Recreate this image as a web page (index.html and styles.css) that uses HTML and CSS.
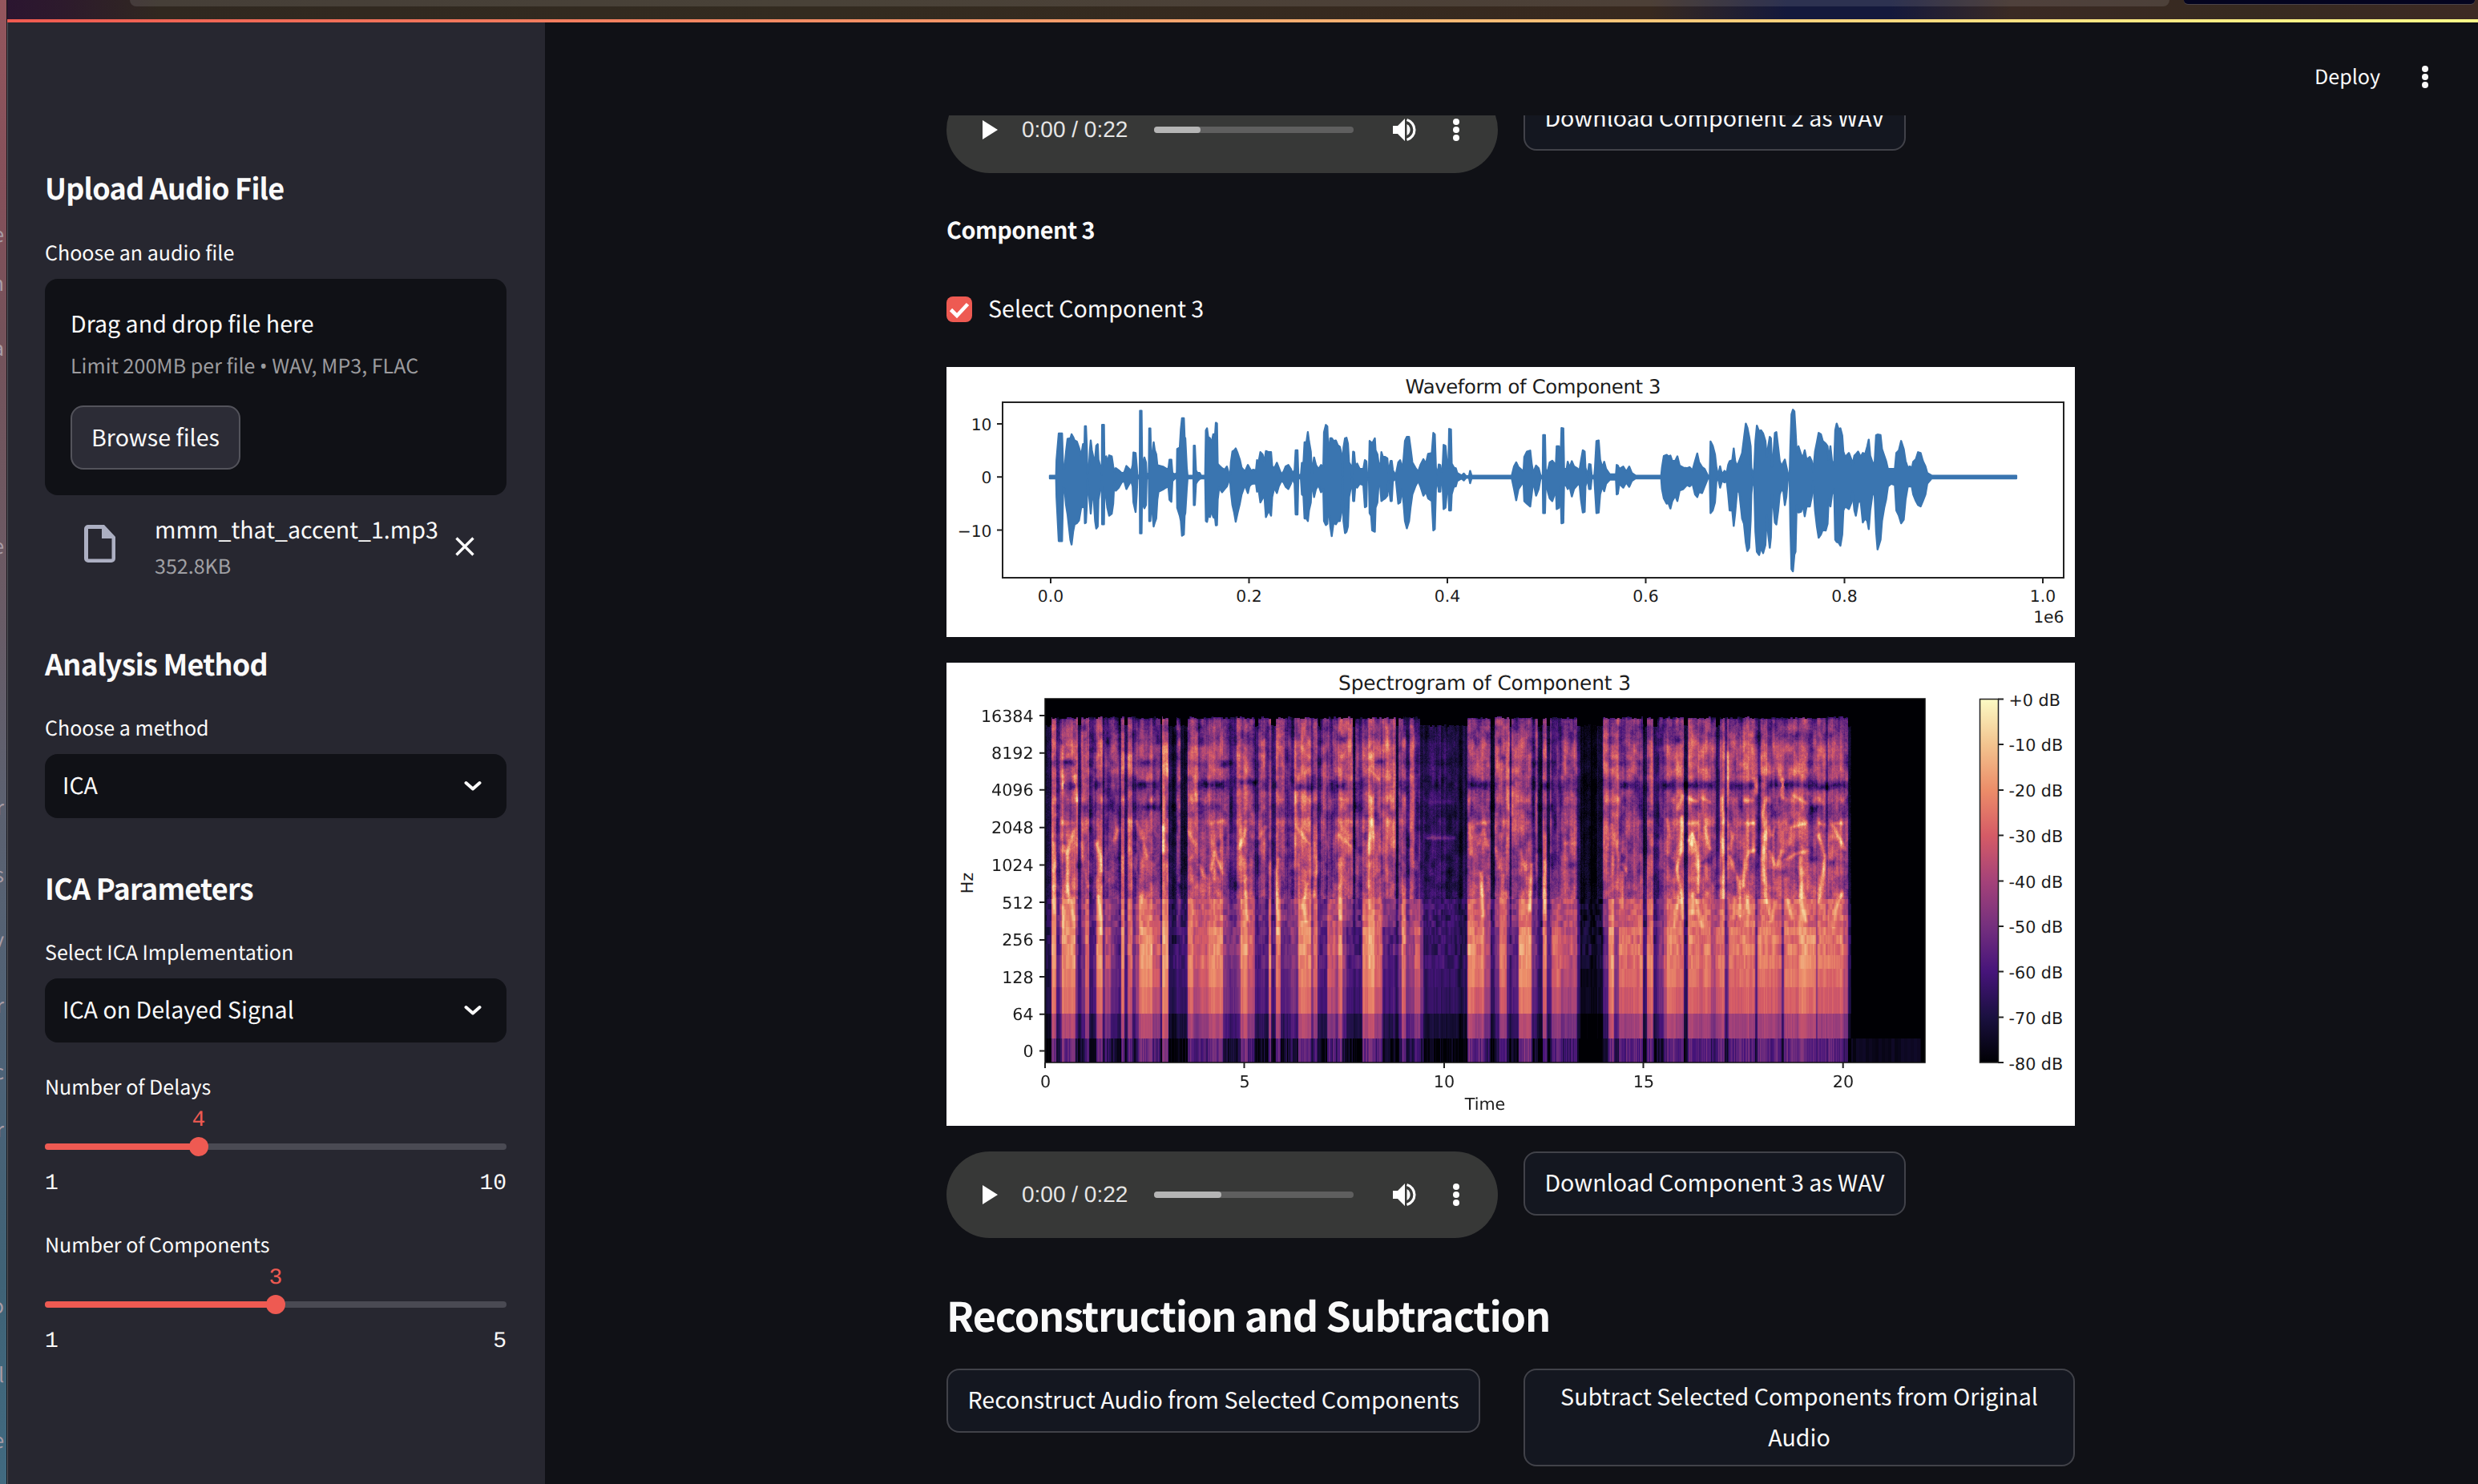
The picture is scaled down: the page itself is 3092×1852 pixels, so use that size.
FILE: index.html
```
<!DOCTYPE html>
<html lang="en">
<head>
<meta charset="utf-8">
<title>Audio Component Analysis</title>
<link rel="stylesheet" href="styles.css">
</head>
<body>
<div class="desktop">
  <span style="top:279px">e</span><span style="top:340px">n</span><span style="top:421px">a</span><span style="top:668px">e</span>
  <span style="top:994px">r</span><span style="top:1078px">s</span><span style="top:1159px">v</span><span style="top:1241px">r</span>
  <span style="top:1324px">c</span><span style="top:1396px">r</span><span style="top:1616px">o</span><span style="top:1702px">l</span><span style="top:1784px">e</span>
</div>
<div class="window">
  <div class="chrome"><div class="address"></div><div class="chip"></div></div>
  <div class="rainbow"></div>
  <div class="app">
    <aside class="sidebar">
      <h2>Upload Audio File</h2>
      <div class="label first">Choose an audio file</div>
      <div class="dropzone">
        <div class="drop-title">Drag and drop file here</div>
        <div class="drop-hint">Limit 200MB per file <span class="bullet">•</span> WAV, MP3, FLAC</div>
        <button class="btn browse">Browse files</button>
      </div>
      <div class="file">
        <svg class="file-icon" width="40" height="48" viewBox="0 0 40 48"><path fill="#acafc2" fill-rule="evenodd" d="M5 0H25L39 15V42a5 5 0 0 1-5 5H5a5 5 0 0 1-5-5V5a5 5 0 0 1 5-5ZM5 5V42.500H34.500V17H22V5Z"/></svg>
        <div class="file-info"><div class="file-name">mmm_that_accent_1.mp3</div><div class="file-size">352.8KB</div></div>
        <svg class="file-close" width="24" height="24" viewBox="0 0 24 24"><path d="M1.500 1.500L22.500 22.500M22.500 1.500L1.500 22.500" stroke="#fafafa" stroke-width="3.400"/></svg>
      </div>
      <h2>Analysis Method</h2>
      <div class="label">Choose a method</div>
      <div class="select"><span>ICA</span><svg width="22" height="14" viewBox="0 0 22 14"><path d="M2.500 3L11 10.500L19.500 3" fill="none" stroke="#fafafa" stroke-width="4" stroke-linecap="round" stroke-linejoin="round"/></svg></div>
      <h2 class="tight">ICA Parameters</h2>
      <div class="label">Select ICA Implementation</div>
      <div class="select"><span>ICA on Delayed Signal</span><svg width="22" height="14" viewBox="0 0 22 14"><path d="M2.500 3L11 10.500L19.500 3" fill="none" stroke="#fafafa" stroke-width="4" stroke-linecap="round" stroke-linejoin="round"/></svg></div>
      <div class="slider">
        <div class="slider-label">Number of Delays</div>
        <div class="value" style="width:66.667%">4</div>
        <div class="track"><div class="fill" style="width:33.333%"></div><div class="thumb"></div></div>
        <div class="ends"><span>1</span><span>10</span></div>
      </div>
      <div class="slider">
        <div class="slider-label">Number of Components</div>
        <div class="value" style="width:100%">3</div>
        <div class="track"><div class="fill" style="width:50%"></div><div class="thumb"></div></div>
        <div class="ends"><span>1</span><span>5</span></div>
      </div>
    </aside>
    <main class="main">
      <header class="header"><span class="deploy">Deploy</span><svg width="12" height="32" viewBox="0 0 12 32" fill="#fafafa"><circle cx="6" cy="6" r="4"/><circle cx="6" cy="16" r="4"/><circle cx="6" cy="26" r="4"/></svg></header>
      <div class="scroll">
        <div class="content">
          <div class="columns clipped">
            <div class="audio">
              <svg class="play" width="20" height="24" viewBox="0 0 20 24"><path d="M0 0L19 12L0 24Z" fill="#fff"/></svg>
              <span class="time">0:00 / 0:22</span>
              <div class="bar"><div class="buffered" style="width:58px"></div></div>
              <svg class="volume" width="32" height="32" viewBox="0 0 32 32"><path d="M1 11H7L16 2V30L7 21H1Z" fill="#fff"/><path d="M18.500 9a8 8 0 0 1 0 14Z" fill="#fff"/><path d="M18.500 3.500a13 13 0 0 1 0 25" fill="none" stroke="#fff" stroke-width="3.200"/></svg>
              <svg class="more" width="10" height="30" viewBox="0 0 10 30" fill="#fff"><circle cx="5" cy="5" r="4"/><circle cx="5" cy="15" r="4"/><circle cx="5" cy="25" r="4"/></svg>
            </div>
            <button class="btn">Download Component 2 as WAV</button>
          </div>
          <h4>Component 3</h4>
          <div class="check"><svg width="32" height="32" viewBox="0 0 32 32"><rect width="32" height="32" rx="8" fill="#ee5a52"/><path d="M5.500 16.500L13 24L26.500 9.500" fill="none" stroke="#fff" stroke-width="4.600"/></svg><span>Select Component 3</span></div>
          <svg class="plot" id="waveform" width="1408" height="337" viewBox="1181 458 1408 337">
            <text class="title" x="1913" y="490.500" text-anchor="middle" textLength="319">Waveform of Component 3</text>
            <polygon id="wave" fill="#3a75b0" stroke="#3a75b0" stroke-width="2.400" stroke-linejoin="round"/>
            <rect x="1251" y="502" width="1324" height="219" fill="none" stroke="#222" stroke-width="2"/>
            <path d="M1311 721v7M1558.500 721v7M1806 721v7M2053.500 721v7M2301.500 721v7M2549 721v7M1251 529h-7M1251 595.300h-7M1251 661.500h-7" stroke="#222" stroke-width="2"/>
            <g text-anchor="middle"><text x="1311" y="750.500">0.0</text><text x="1558.500" y="750.500">0.2</text><text x="1806" y="750.500">0.4</text><text x="2053.500" y="750.500">0.6</text><text x="2301.500" y="750.500">0.8</text><text x="2549" y="750.500">1.0</text></g>
            <g text-anchor="end"><text x="2575.500" y="776.500">1e6</text><text x="1237.500" y="536.500">10</text><text x="1237.500" y="602.800">0</text><text x="1237.500" y="669.500">−10</text></g>
          </svg>
          <svg class="plot second" width="1408" height="578" viewBox="1181 827 1408 578">
            <defs><linearGradient id="magma" x1="0" y1="0" x2="0" y2="1"><stop offset="0" stop-color="#fbfac4"/><stop offset=".125" stop-color="#f3c48f"/><stop offset=".25" stop-color="#ec8d69"/><stop offset=".375" stop-color="#d55b66"/><stop offset=".5" stop-color="#a54279"/><stop offset=".625" stop-color="#75307e"/><stop offset=".75" stop-color="#46147a"/><stop offset=".875" stop-color="#1a1040"/><stop offset="1" stop-color="#000004"/></linearGradient></defs>
            <text class="title" x="1852.500" y="860.500" text-anchor="middle" textLength="365">Spectrogram of Component 3</text>
            <foreignObject x="1304" y="872" width="1098" height="454"><canvas id="spectrogram" width="1098" height="454"></canvas></foreignObject>
            <rect x="1304" y="872" width="1098" height="454" fill="none" stroke="#111" stroke-width="1.500"/>
            <path d="M1304 893h-7M1304 939.800h-7M1304 985.700h-7M1304 1032.800h-7M1304 1079.500h-7M1304 1126h-7M1304 1173h-7M1304 1219h-7M1304 1265.800h-7M1304 1311.400h-7M1304 1326v7M1552.500 1326v7M1802 1326v7M2050.500 1326v7M2299.700 1326v7" stroke="#222" stroke-width="2"/>
            <g text-anchor="end"><text x="1289.700" y="900.500">16384</text><text x="1289.700" y="947.300">8192</text><text x="1289.700" y="993.300">4096</text><text x="1289.700" y="1040.300">2048</text><text x="1289.700" y="1087">1024</text><text x="1289.700" y="1133.700">512</text><text x="1289.700" y="1180.400">256</text><text x="1289.700" y="1226.700">128</text><text x="1289.700" y="1273.400">64</text><text x="1289.700" y="1319">0</text></g>
            <g text-anchor="middle"><text x="1304.500" y="1356.500">0</text><text x="1553" y="1356.500">5</text><text x="1802" y="1356.500">10</text><text x="2051" y="1356.500">15</text><text x="2300" y="1356.500">20</text><text x="1853" y="1385">Time</text><text transform="translate(1213.500 1102) rotate(-90)">Hz</text></g>
            <rect x="2470.500" y="872.500" width="23" height="453.500" fill="url(#magma)" stroke="#222" stroke-width="1.500"/>
            <path d="M2493 872.500h7M2493 929h7M2493 986h7M2493 1042.500h7M2493 1099.500h7M2493 1156h7M2493 1212.500h7M2493 1269.500h7M2493 1326h7" stroke="#222" stroke-width="2"/>
            <g><text x="2506.500" y="880.500">+0 dB</text><text x="2506.500" y="937.200">-10 dB</text><text x="2506.500" y="994">-20 dB</text><text x="2506.500" y="1050.700">-30 dB</text><text x="2506.500" y="1107.500">-40 dB</text><text x="2506.500" y="1164">-50 dB</text><text x="2506.500" y="1221">-60 dB</text><text x="2506.500" y="1277.700">-70 dB</text><text x="2506.500" y="1334.500">-80 dB</text></g>
          </svg>
          <div class="columns player">
            <div class="audio">
              <svg class="play" width="20" height="24" viewBox="0 0 20 24"><path d="M0 0L19 12L0 24Z" fill="#fff"/></svg>
              <span class="time">0:00 / 0:22</span>
              <div class="bar"><div class="buffered" style="width:84px"></div></div>
              <svg class="volume" width="32" height="32" viewBox="0 0 32 32"><path d="M1 11H7L16 2V30L7 21H1Z" fill="#fff"/><path d="M18.500 9a8 8 0 0 1 0 14Z" fill="#fff"/><path d="M18.500 3.500a13 13 0 0 1 0 25" fill="none" stroke="#fff" stroke-width="3.200"/></svg>
              <svg class="more" width="10" height="30" viewBox="0 0 10 30" fill="#fff"><circle cx="5" cy="5" r="4"/><circle cx="5" cy="15" r="4"/><circle cx="5" cy="25" r="4"/></svg>
            </div>
            <button class="btn">Download Component 3 as WAV</button>
          </div>
          <h1>Reconstruction and Subtraction</h1>
          <div class="columns actions">
            <button class="btn wide">Reconstruct Audio from Selected Components</button>
            <button class="btn tall">Subtract Selected Components from Original<br>Audio</button>
          </div>
        </div>
      </div>
    </main>
  </div>
</div>
<script src="charts.js"></script>
</body>
</html>
```
FILE: styles.css
```
* { box-sizing: border-box; }
body {
  margin: 0;
  width: 3092px;
  height: 1852px;
  overflow: hidden;
  display: flex;
  background: #101116;
  color: #fafafa;
  font-family: "Noto Sans CJK SC", "Noto Sans", sans-serif;
  font-size: 28.600px;
  text-rendering: geometricPrecision;
}
svg { display: block; flex: none; }
.desktop {
  position: relative;
  flex: none;
  width: 8px;
  overflow: hidden;
  background: linear-gradient(#94565d 0, #84505a 240px, #74525a 420px, #6b5a64 720px, #5c6170 1000px, #4c6277 1350px, #3f6276 1600px, #416a80 1852px);
}
.desktop span {
  position: absolute;
  right: 3px;
  font-size: 25px;
  line-height: 26px;
  color: #a99ca6;
}
.window {
  flex: 1;
  display: flex;
  flex-direction: column;
  border-left: 1px solid #15151a;
}
.chrome {
  height: 24px;
  display: flex;
  align-items: flex-start;
  padding-left: 153px;
  gap: 18px;
  background: linear-gradient(90deg, #2b1530 0, #2d1a2c 70px, #302820 190px, #332b20 1000px, #38291f 2050px, #14193c 2220px, #14193c 2350px, #3a2a24 2500px, #372a20 2800px, #3d2a24 3083px);
}
.address { width: 2545px; height: 8px; background: rgba(255,255,255,.11); border-radius: 0 0 10px 10px; }
.chip { width: 363px; height: 5px; background: #04041f; border-radius: 0 0 6px 6px; box-shadow: 0 1px 0 #4b4348; }
.rainbow { height: 4px; background: linear-gradient(90deg, #ef5a50, #f4a06c 45%, #fbdc80 78%, #fffb88); }
.app { flex: 1; display: flex; min-height: 0; }
.sidebar {
  flex: none;
  width: 671px;
  padding: 182px 48px 0 46px;
  background: #272730;
  border-left: 1px solid #55555c;
}
h1, h2, h4 { margin: 0; font-weight: 600; white-space: nowrap; }
h2 { font-size: 36px; line-height: 48px; letter-spacing: -.75px; }
h2.tight { margin-top: 63px; }
.label { margin: 36px 0 13px; font-size: 25.050px; line-height: 40px; }
.label.first { margin-top: 37px; }
.dropzone { height: 270px; padding: 32px; border-radius: 16px; background: #101116; }
.drop-title { line-height: 48px; }
.drop-hint { margin: 8px 0 30px; font-size: 25.050px; line-height: 40px; height: 40px; color: #9b9b9e; white-space: nowrap; }
.bullet { font-family: "Noto Sans", sans-serif; line-height: 1; }
.btn {
  height: 80px;
  padding: 0 26px 3px;
  border: 2px solid #414249;
  border-radius: 16px;
  background: #141720;
  color: #fafafa;
  font: inherit;
  line-height: 51.200px;
  white-space: nowrap;
}
.browse { width: 212px; padding: 0 0 3px; background: #2c2c36; border-color: #53535b; }
.file { display: flex; height: 186px; padding: 27px 8px 0 49px; }
.file-icon { margin-top: 10px; }
.file-info { flex: 1; margin-left: 48px; white-space: nowrap; }
.file-name { height: 32px; line-height: 32px; }
.file-size { margin-top: 13px; font-size: 25.050px; line-height: 32px; color: #a0a0a4; }
.file-close { margin: 25px 32px 0 0; }
.select {
  display: flex;
  justify-content: space-between;
  align-items: center;
  height: 80px;
  padding: 0 31px 3px 22px;
  border-radius: 16px;
  background: #101116;
}
.select svg { margin-top: 3px; }
.slider { margin-top: 35px; }
.slider + .slider { margin-top: 39px; }
.slider-label { font-size: 25.050px; line-height: 40px; }
.value, .ends { font-family: "Liberation Mono", monospace; font-size: 28px; }
.value { margin-top: 3px; line-height: 40px; text-align: center; color: #ee5a52; }
.track {
  display: flex;
  align-items: center;
  height: 8px;
  margin: 8px 0 27px;
  border-radius: 4px;
  background: #4a4a53;
}
.fill { height: 8px; border-radius: 4px; background: #ee5a52; }
.thumb { flex: none; width: 24px; height: 24px; margin-left: -12px; border-radius: 50%; background: #ee5a52; }
.ends { display: flex; justify-content: space-between; line-height: 32px; }
.main { flex: 1; min-width: 0; display: flex; flex-direction: column; background: #101116; }
.header {
  flex: none;
  height: 116px;
  display: flex;
  justify-content: flex-end;
  gap: 50px;
  padding: 52px 60px 0 0;
}
.deploy { font-size: 25.050px; line-height: 30px; }
.scroll { flex: 1; min-height: 0; overflow: hidden; padding-left: 501px; }
.content { width: 1408px; }
.columns { display: grid; grid-template-columns: 688px 688px; gap: 32px; align-items: start; justify-items: start; }
.clipped { margin-top: -36px; }
.columns .btn { width: 477px; padding: 0 0 4px; }
.columns .wide { width: 666px; }
.audio {
  display: flex;
  align-items: center;
  width: 688px;
  height: 108px;
  padding-left: 45px;
  border-radius: 54px;
  background: #373837;
}
.time { width: 134px; margin-left: 29px; font-family: "Liberation Sans", Arial, sans-serif; font-size: 28px; color: #e6e6e6; white-space: nowrap; }
.bar { width: 249px; height: 8px; margin-left: 31px; border-radius: 4px; background: #5f5f5f; }
.buffered { height: 8px; border-radius: 4px; background: #b5b5b5; }
.volume { margin-left: 48px; }
.more { margin-left: 43px; }
h4 { margin-top: 47px; font-size: 28.800px; line-height: 48px; letter-spacing: -.5px; }
.check { display: flex; align-items: center; gap: 20px; height: 32px; margin: 59px 0 56px; line-height: 32px; }
.check span { margin-top: -3px; }
.plot { background: #fff; }
.plot text { font-family: "DejaVu Sans", sans-serif; font-size: 20.300px; fill: #1c1c1c; }
.plot .title { font-size: 24.300px; }
.second text { font-size: 20.700px; }
.second .title { font-size: 24.800px; }
.plot canvas { display: block; }
.second { margin-top: 32px; }
.player { margin-top: 32px; }
h1 { margin-top: 64px; font-size: 50.400px; line-height: 64px; letter-spacing: -1.130px; }
.actions { margin-top: 35px; }
.columns .tall { width: 688px; height: 122px; }
```
FILE: charts.js
```
// Waveform envelope: x, top, bottom triples for both halves of the recording.
const waveA = `305 430 440;322 430 440;323 372 510;329 272 675;338 272 675;341 405 475;345 400 480;349 340 540;353 292 575;361 290 672;364 275 688;368 285 640;372 298 612;378 302 608;384 325 598;390 355 548;395 312 548;399 312 545;400 245 608;403 245 606;405 315 545;407 425 445;411 400 500;414 330 540;416 298 572;419 335 520;424 368 515;428 365 600;431 318 628;435 312 620;437 370 520;442 395 480;446 425 450;447 240 612;452 240 612;453 360 505;458 358 512;461 380 550;466 354 580;473 358 572;477 395 535;480 415 450;484 402 486;492 410 475;500 420 455;507 418 450;513 394 480;521 405 460;526 415 450;530 390 470;532 343 530;538 345 566;541 395 500;543 430 440;549 428 440;550 187 646;554 187 646;556 420 440;558 385 540;562 362 552;566 380 540;568 430 440;574 420 440;575 253 600;578 253 600;580 355 540;584 350 570;587 305 620;590 335 605;594 350 590;597 390 520;600 392 490;612 396 482;620 403 475;627 405 470;630 370 520;635 370 528;638 420 450;645 425 440;650 420 440;651 330 550;658 325 580;661 255 600;664 215 655;669 215 650;671 285 580;673 290 570;677 400 480;679 430 440;695 430 440;696 318 540;699 318 540;702 410 460;706 420 450;712 420 442;716 430 440;727 430 440;729 260 600;732 253 603;735 285 580;740 290 585;744 310 560;749 275 585;754 275 590;756 232 616;759 235 615;761 385 520;765 392 475;773 402 492;780 408 480;786 396 470;791 420 450;795 425 450;797 380 490;801 340 540;806 335 570;810 328 602;815 345 570;821 370 535;826 400 500;835 415 465;843 390 495;847 400 470;852 412 462;857 408 460;865 410 460;868 372 490;872 380 480;877 342 530;883 350 515;888 380 505;892 338 585;900 342 560;906 342 580;909 395 510;915 402 475;922 382 495;927 400 470;934 425 450;940 415 455;946 395 472;953 390 480;960 405 460;964 420 440;970 410 460;973 335 575;978 335 575;980 425 440;987 430 440;990 382 500;994 385 505;997 305 590;1002 306 590;1006 267 600;1009 300 560;1014 340 530;1017 420 450;1023 362 510;1028 390 480;1035 405 465;1042 390 492;1048 400 480;1050 268 600;1055 240 615;1059 245 610;1062 355 530;1067 290 620;1071 290 656;1076 300 605;1082 298 612;1087 315 600;1093 322 600;1097 345 570;1100 430 440;1103 325 600;1107 290 645;1111 288 640;1115 310 620;1118 380 510;1122 390 480;1126 430 440;1129 340 525;1132 342 525;1135 395 470;1140 385 475;1147 405 460;1157 405 465;1161 372 548;1165 376 545;1167 420 440;1172 420 440;1174 300 570;1178 305 580;1181 310 635;1188 290 640;1190 335 550;1195 350 530;1198 380 470;1203 400 470;1206 342 525;1210 360 520;1216 360 515;1222 365 505;1225 420 450;1231 375 525;1234 375 525;1237 410 450;1245 428 440;1252 380 535;1257 372 530;1262 405 480;1266 370 530;1270 300 600;1275 285 627;1281 285 600;1285 325 550;1290 380 500;1298 400 470;1306 415 450;1312 390 470;1320 368 505;1327 385 490;1333 348 515;1343 345 525;1347 270 635;1351 275 630;1354 400 480;1359 425 440;1362 388 490;1366 390 490;1368 415 450;1372 410 450;1375 315 555;1380 318 550;1384 380 490;1388 400 480;1390 255 560;1395 257 560;1397 385 500;1403 400 470;1408 402 470;1412 420 450;1424 430 440;1430 422 448;1436 432 438;1444 432 438;1447 412 458;1451 430 440;1550 430 440`;
const waveB = `14 430 440;20 395 480;26 380 522;32 398 480;42 410 460;46 410 460;48 360 525;55 340 535;64 336 545;68 385 500;72 420 450;80 392 505;87 402 480;92 430 440;98 430 440;99 278 570;104 278 570;106 410 450;112 410 490;117 380 515;124 374 525;130 385 500;134 385 490;136 320 555;142 320 550;146 400 470;149 252 608;154 253 606;156 405 460;163 405 470;166 378 480;171 400 470;177 376 508;183 395 480;192 403 465;198 410 460;202 375 520;207 335 568;212 340 565;214 400 470;220 430 440;224 387 480;228 388 480;231 430 440;238 430 440;240 400 480;244 300 570;250 298 568;254 370 500;260 400 470;265 378 488;270 405 460;280 425 445;297 425 445;299 390 500;302 392 498;306 405 460;317 396 475;325 415 455;333 396 472;340 420 450;350 430 440;420 430 440;422 400 480;427 356 515;435 352 535;439 358 530;445 355 553;450 375 525;458 375 505;464 358 525;470 392 485;480 400 480;490 402 465;497 398 470;505 410 460;512 375 500;518 347 510;523 380 490;531 398 495;538 405 470;547 430 440;552 430 440;554 302 570;560 318 560;566 350 530;570 400 450;575 430 440;580 395 475;585 425 450;592 412 455;598 420 450;602 390 500;606 376 560;613 372 560;617 328 618;621 375 570;626 395 490;632 375 490;640 345 590;645 290 610;650 235 680;654 250 712;659 285 700;663 320 600;665 400 500;669 430 440;673 400 470;676 300 640;680 243 715;686 265 727;691 260 700;697 272 720;703 300 690;707 360 580;711 320 650;715 285 700;718 290 660;721 395 500;724 370 530;729 270 605;733 267 613;738 325 560;742 375 500;747 395 480;752 380 490;756 370 540;760 395 510;764 420 445;769 425 445;771 320 620;774 200 780;778 183 788;782 190 725;785 260 715;788 340 540;793 320 568;800 350 565;805 362 540;810 335 582;815 370 545;824 360 545;829 375 510;833 415 450;838 340 560;843 305 620;848 270 662;854 275 650;859 300 632;867 310 635;872 320 610;875 370 520;880 320 545;884 375 500;890 390 480;893 260 670;897 235 678;902 255 680;907 253 692;912 280 650;915 340 560;920 360 545;930 345 555;937 370 530;940 390 490;945 355 560;949 350 580;955 340 530;962 360 525;968 345 605;974 350 590;980 320 600;984 295 630;988 355 560;994 380 500;1000 385 500;1004 278 640;1008 276 706;1016 278 670;1020 330 600;1026 355 550;1031 375 520;1036 405 470;1045 405 460;1055 405 465;1059 345 560;1066 335 580;1072 300 608;1079 330 595;1084 375 520;1090 400 470;1096 395 470;1101 405 470;1105 378 500;1112 368 525;1118 342 540;1125 345 545;1131 375 525;1138 395 500;1143 420 460;1155 430 440;1385 430 440`;
const env = [];
for (const [src, x0] of [[waveA, 1170], [waveB, 1880]]) {
  for (const t of src.split(';')) {
    const [x, a, b] = t.split(' ').map(Number);
    env.push([x0 + x / 2.178, 450.3 + a / 3, 450.3 + b / 3]);
  }
}
document.getElementById('wave').setAttribute('points',
  env.map(p => p[0].toFixed(1) + ',' + p[1].toFixed(1)).join(' ') + ' ' +
  env.slice().reverse().map(p => p[0].toFixed(1) + ',' + p[2].toFixed(1)).join(' '));

// Spectrogram segments: end position (third-pixels), level above 512 Hz, level below.
const segA = `22,8,15 42,60,78 52,28,32 62,50,45 112,58,78 122,60,42 133,12,25 150,56,40 165,60,70 180,30,28 190,40,35 215,58,74 225,28,40 245,35,58 275,42,38 283,20,28 295,58,76 307,15,28 327,58,65 337,28,35 350,45,55 400,50,78 430,36,62 437,12,35 462,62,82 490,12,20 505,45,28 533,8,25 555,60,76 572,62,62 612,40,65 665,54,76 690,40,42 717,28,40 730,60,45 757,56,77 785,46,62 797,20,28 825,48,32 835,28,25 845,52,75 862,18,30 880,58,72 895,60,35 920,32,35 932,28,45 948,62,40 995,62,77 1003,30,45 1020,58,70 1032,22,30 1055,45,28 1085,40,62 1098,50,55`;
const segB = `15,64,75 30,60,45 52,62,30 63,10,25 75,48,30 90,30,25 110,48,75 135,62,80 165,50,65 215,60,30 225,15,25 235,45,40 252,55,76 265,25,45 285,60,50 305,30,66 317,10,45 445,18,24 482,8,18 510,48,78 545,50,72 570,50,55 583,10,25 603,58,40 628,55,70 640,62,35 647,15,25 675,55,35 722,45,76 738,30,40 746,45,30 763,15,25 780,52,72 790,15,30 798,50,35 832,30,66 870,46,55 892,48,58 905,20,25 990,7,10 1010,60,35 1030,52,78 1048,60,45 1070,40,70 1098,42,66`;
const segC = `25,45,68 42,35,72 57,12,25 80,52,72 95,15,25 118,30,40 132,40,60 165,50,76 195,58,70 208,12,22 250,60,72 265,48,65 295,55,70 315,45,55 330,15,65 347,60,72 355,25,35 362,60,40 415,48,70 460,60,72 470,45,35 483,25,72 507,60,72 545,46,70 560,52,62 570,55,35 600,52,72 625,52,70 660,58,78 688,40,74 696,50,50 725,55,70 735,25,65 790,52,70 808,48,60 820,10,20 1098,-30,-30`;
const W = 1098, H = 454;
const hi = new Float32Array(W), lo = new Float32Array(W);
[segA, segB, segC].forEach((s, k) => {
  let x = k * 366;
  for (const t of s.split(' ')) {
    const [e, h, l] = t.split(',').map(Number);
    const end = k * 366 + e / 3;
    for (; x < end; x++) { hi[x] = h / 100; lo[x] = l / 100; }
  }
});
const rnd = (x, y) => {
  let n = Math.imul(x + 7, 374761393) ^ Math.imul(y + 13, 668265263);
  n = Math.imul(n ^ (n >>> 13), 1274126177);
  return ((n ^ (n >>> 16)) >>> 0) / 4294967296 - .5;
};
const smooth = (x, y) => {
  const i = Math.floor(x), j = Math.floor(y), f = x - i, g = y - j;
  const u = f * f * (3 - 2 * f), v = g * g * (3 - 2 * g);
  return (rnd(i, j) * (1 - u) + rnd(i + 1, j) * u) * (1 - v) + (rnd(i, j + 1) * (1 - u) + rnd(i + 1, j + 1) * u) * v;
};
// Average spectrum shape over the upper part: y, offset.
const shape = [[70, -.3], [80, -.14], [150, -.1], [175, .01], [215, .01], [235, -.05], [262, .03], [290, 0], [308, -.1], [335, -.12], [355, -.04], [378, 0], [400, -.1], [440, -.07], [460, .03], [485, 0], [540, -.01], [590, -.05], [650, -.06], [700, -.06], [755, -.02]];
const offset = y => {
  for (let i = 1; i < shape.length; i++) if (y <= shape[i][0]) {
    const a = shape[i - 1], b = shape[i];
    return a[1] + (b[1] - a[1]) * (y - a[0]) / (b[0] - a[0]);
  }
  return 0;
};
const extra = new Float32Array(W * H);
const ridge = (k, pts, amp, r) => {
  for (let i = 1; i < pts.length; i++) {
    const [x0, y0] = pts[i - 1], [x1, y1] = pts[i];
    const n = Math.ceil(Math.hypot(x1 - x0, y1 - y0) / 2);
    for (let s = 0; s <= n; s++) {
      const cx = k * 366 + (x0 + (x1 - x0) * s / n) / 3, cy = (y0 + (y1 - y0) * s / n) / 3;
      for (let y = Math.floor(cy - r * 2); y <= cy + r * 2; y++) for (let x = Math.floor(cx - r * 2); x <= cx + r * 2; x++) {
        if (x < 0 || y < 0 || x >= W || y >= H) continue;
        const e = amp * Math.exp(-((x - cx) ** 2 + (y - cy) ** 2) / (r * r));
        const q = y * W + x;
        if (Math.abs(e) > Math.abs(extra[q])) extra[q] = e;
      }
    }
  }
};
const ridges = [
  [0, '32,540 36,600 30,700 34,800', .2], [0, '68,550 80,585 98,520 108,490', .22], [0, '82,590 82,720', .25], [0, '80,700 98,770 108,850', .22], [0, '66,780 66,850', .16], [0, '60,270 66,330', .18], [0, '112,290 120,380', .18],
  [0, '135,540 142,620 158,700', .16], [0, '190,540 208,590 212,640', .18], [0, '198,740 212,880', .24], [0, '256,530 272,490', .2], [0, '340,460 356,500 380,590', .17], [0, '356,740 354,850', .15], [0, '440,480 440,570', .18], [0, '450,160 456,280', .14],
  [0, '533,490 560,545', .16], [0, '555,290 566,380', .18], [0, '575,620 598,670', .18], [0, '620,640 634,575 664,650', .24], [0, '632,600 640,720', .14], [0, '725,560 750,490', .2], [0, '742,600 750,740 760,830', .16], [0, '797,520 825,480', .17], [0, '872,600 862,650 872,880', .22],
  [0, '935,350 940,480 985,540', .2], [0, '980,690 965,770 975,830', .2], [0, '1005,540 1015,640 1004,740', .18], [0, '66,465 104,465', .12], [0, '622,465 664,455', .14],
  [1, '0,510 45,550', .18], [1, '5,600 5,820', .18], [1, '122,200 125,270 150,300', .13], [1, '122,370 122,470 105,600 110,700', .18], [1, '125,480 150,640', .14], [1, '190,270 190,370', .12], [1, '247,830 247,960', .1], [1, '487,470 495,580', .18], [1, '525,540 540,490 560,560', .16], [1, '530,650 540,810', .24], [1, '520,465 548,465', .16],
  [1, '590,560 600,630', .16], [1, '615,660 605,760', .16], [1, '630,330 636,410', .16], [1, '650,330 648,430', .16], [1, '680,570 700,640', .18], [1, '722,620 716,790', .3], [1, '771,610 771,800', .28], [1, '335,520 430,520', .16], [1, '330,385 430,385', .06], [1, '850,540 885,540', .15], [1, '1005,560 1022,470 1050,600', .13], [1, '1060,650 1060,780', .2], [1, '1066,620 1075,640', .2],
  [2, '130,450 145,520', .15], [2, '172,410 190,362', .2], [2, '186,440 184,560 168,640 184,730 192,820', .28], [2, '180,700 158,850', .2], [2, '210,370 240,385', .18], [2, '265,370 290,385', .2], [2, '210,465 240,465', .22], [2, '212,530 225,505 238,540 248,640 248,720', .28], [2, '222,520 222,545', .26], [2, '272,480 292,560', .22], [2, '228,730 228,800', .2], [2, '238,750 262,850', .22],
  [2, '340,370 340,530 342,740', .22], [2, '357,200 358,400', .16], [2, '366,470 376,520 362,560', .16], [2, '365,590 402,690 404,810', .26], [2, '414,700 426,600 440,570 456,566', .26], [2, '425,380 450,380', .22], [2, '425,465 455,465', .22], [2, '465,300 465,350', .24], [2, '502,370 488,430 500,500 490,600 500,740', .22], [2, '430,740 436,800', .2], [2, '385,740 380,820', .2],
  [2, '510,480 524,510 535,480', .18], [2, '515,570 540,630 560,570', .2], [2, '500,740 520,830 535,760', .2], [2, '563,300 563,370', .24], [2, '578,600 610,580 655,570', .24], [2, '590,540 594,480 650,465', .2], [2, '605,360 650,390', .18], [2, '630,590 630,740 650,830', .24], [2, '580,750 600,820', .2],
  [2, '698,510 722,590 708,700 700,760', .24], [2, '700,465 720,470', .18], [2, '700,370 710,390', .15], [2, '750,470 795,560', .22], [2, '755,465 785,465', .18], [2, '785,730 760,790 755,850', .24]
];
for (const [k, s, a] of ridges) ridge(k, s.split(' ').map(p => p.split(',').map(Number)), a * .92, 2.6);
const holes = [[0, 72, 105, 325], [0, 75, 95, 237], [0, 355, 400, 320], [0, 370, 395, 240], [0, 370, 400, 405], [0, 590, 660, 320], [0, 592, 598, 245], [0, 658, 664, 245], [0, 735, 780, 312], [0, 955, 990, 330], [0, 200, 205, 320], [1, 613, 615, 220], [1, 150, 158, 235], [1, 490, 545, 322], [1, 770, 771, 325], [1, 8, 9, 325], [1, 16, 17, 150], [1, 1060, 1090, 322], [2, 125, 195, 322], [2, 215, 285, 322], [2, 375, 445, 325], [2, 525, 555, 320], [2, 580, 640, 320], [2, 700, 730, 330], [2, 750, 790, 322], [2, 172, 174, 155], [2, 675, 685, 410], [2, 672, 685, 600], [2, 275, 285, 610], [2, 745, 750, 610]];
for (const [k, a, b, y] of holes) ridge(k, [[a, y], [b, y]], -.2, 4.5);
const edges = [750, 768, 787, 808, 830, 855, 883, 918, 958, 1010, 1078, 1178, 1271, 1364];
const lut = [[0, 0, 4], [26, 16, 64], [70, 20, 122], [117, 48, 126], [165, 66, 121], [213, 91, 102], [236, 141, 105], [243, 196, 143], [251, 250, 196]];
const ctx = document.getElementById('spectrogram').getContext('2d');
const img = ctx.createImageData(W, H);
const last = 732 + 273;
for (let x = 0; x < W; x++) {
  const sx = Math.max(0, x - 1), ex = Math.min(W - 1, x + 1);
  const h = hi[x] * .7 + (hi[sx] + hi[ex]) * .15, l = lo[x] * .7 + (lo[sx] + lo[ex]) * .15;
  const streak = rnd(x, 900) * .07 + smooth(x / 3, 700) * .12;
  const top = 70 + rnd(Math.floor(x / 3), 31) * 10 + (h < .25 ? 30 : 0);
  for (let y = 0; y < H; y++) {
    const Y = y * 3;
    let v;
    if (Y < 750) {
      const mix = Math.max(0, Math.min(1, (Y - 520) / 230)) * .4;
      const base = h * (1 - mix) + l * mix;
      v = base + offset(Y) * Math.min(1, base * 2) + streak;
      v += (smooth(x / 7, y / 9) * .2 + smooth(x / 4, y / 26 + 50) * .2 + smooth(x / 2.2, y / 2.2 + 300) * .1) * Math.min(1, base * 2.2 + .1) + rnd(x, y) * (base > 0 ? .07 : 0);
      v += extra[y * W + x] * (base > .1 ? 1 : .1);
      if (Y < top) v = v * .05 - .02;
    } else {
      let b = 0;
      while (Y >= edges[b + 1]) b++;
      const cell = smooth(x / 4, b * 7.3) * .16 + rnd(Math.floor(x / 2), b + 400) * .07;
      if (b < 9) v = l + cell - .02 + (b < 5 ? (h - l) * .35 + .02 : 0);
      else if (b === 9) v = l - .04 + cell * .5;
      else if (b === 10) v = l * .92 - .03 + rnd(x, 21) * .04;
      else if (b === 11) v = l * .83 - .1 + rnd(x, 22) * .05;
      else v = l * .6 - .14 + rnd(x, 23) * .16 + (l > .5 ? .02 : 0);
      v += streak * .5;
      if (b < 6) v += extra[y * W + x] * .8;
      if (b === 12 && x > last && x < W - 5) v = .05 + rnd(Math.floor(x / 4), 77) * .05;
    }
    if (x > last && Y < 1271) v = 0;
    v = Math.max(0, Math.min(.97, v)) * 8;
    const i = Math.min(7, Math.floor(v)), f = v - i, o = (y * W + x) * 4;
    for (let c = 0; c < 3; c++) img.data[o + c] = lut[i][c] + (lut[i + 1][c] - lut[i][c]) * f;
    img.data[o + 3] = 255;
  }
}
ctx.putImageData(img, 0, 0);
```
